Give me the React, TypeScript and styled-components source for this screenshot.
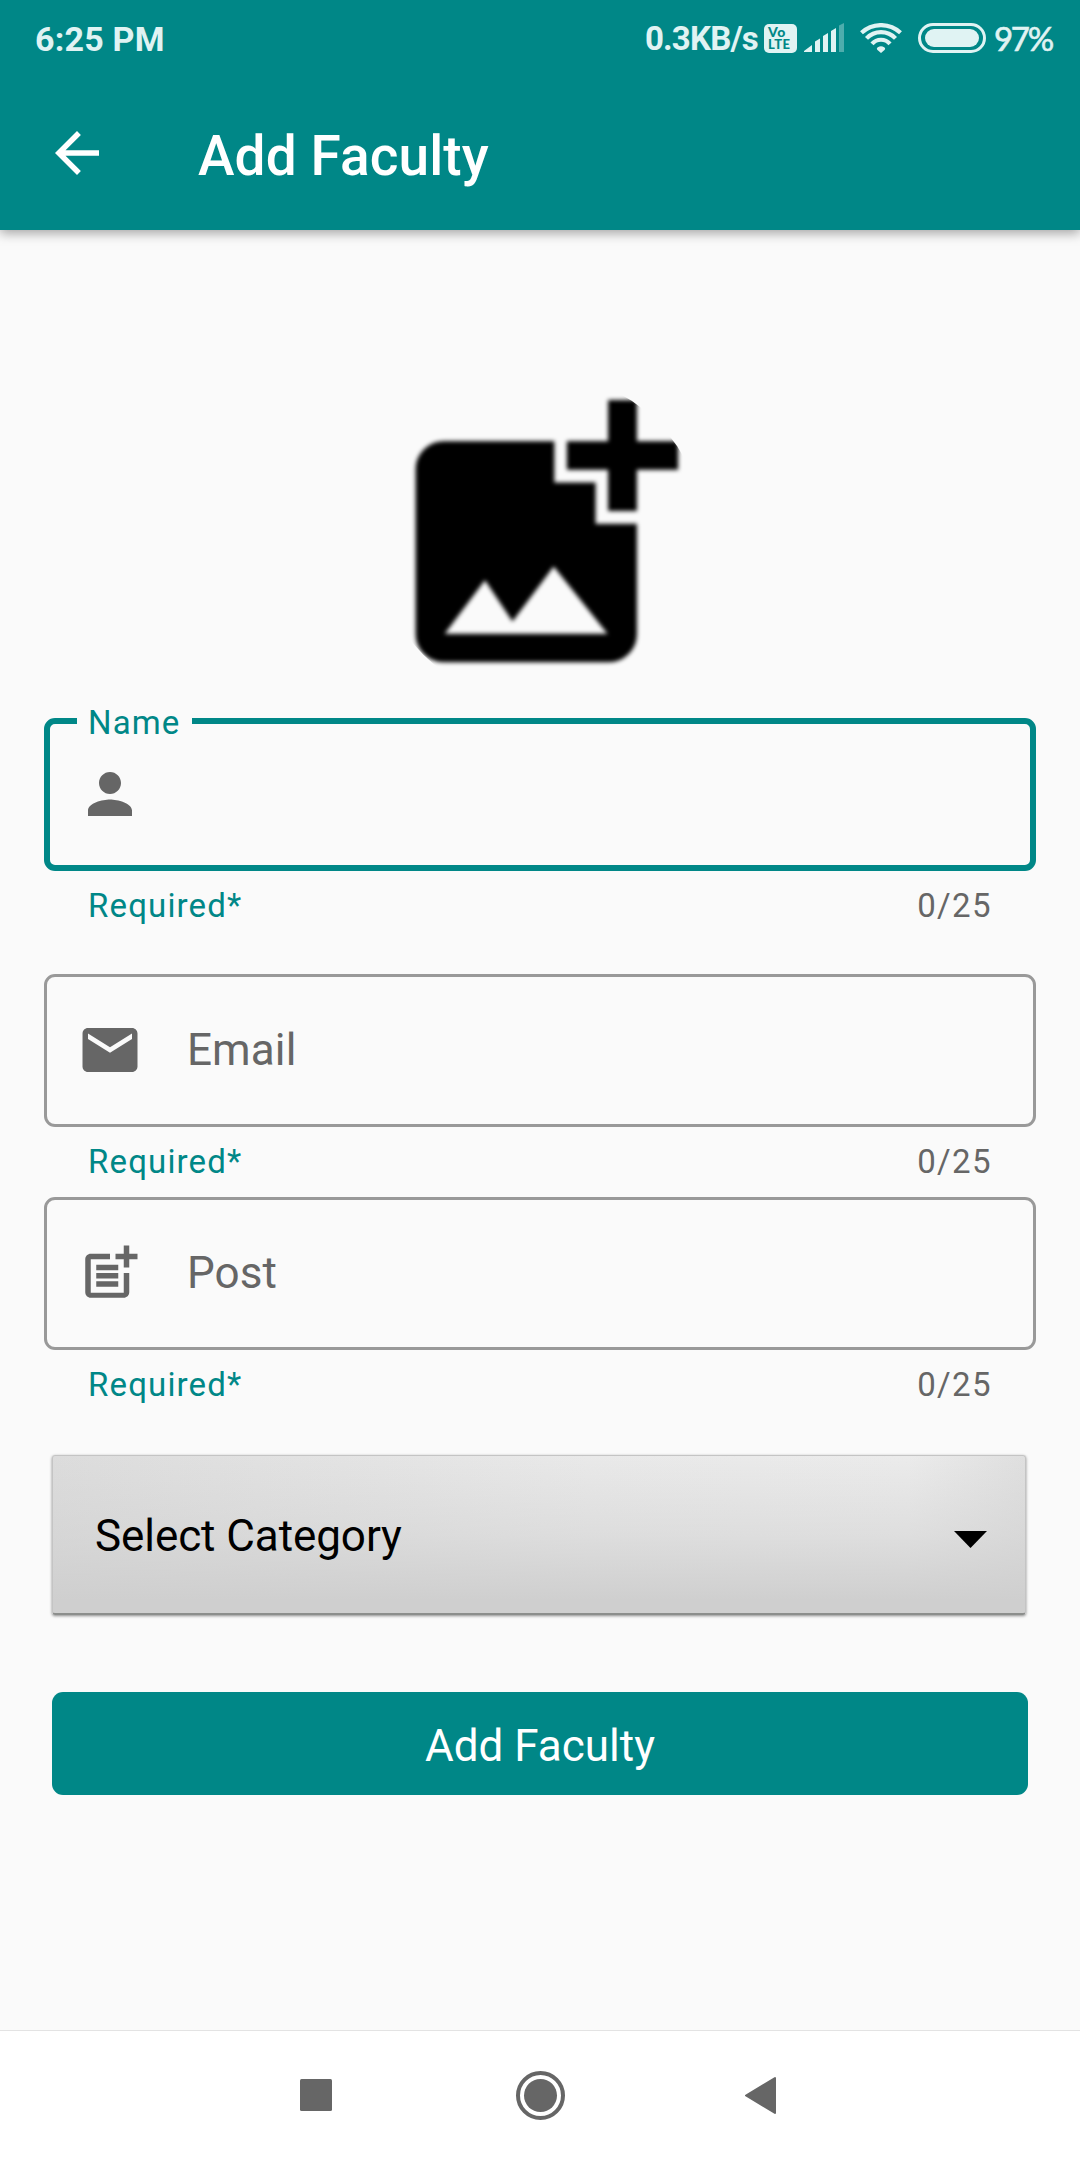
import React from 'react';
import styled, { createGlobalStyle } from 'styled-components';

const teal = '#008787';
const grey = '#666666';
const statusInk = '#e0f3f3';

const GlobalStyle = createGlobalStyle`
  html, body { margin: 0; padding: 0; background: #fafafa; }
  * { box-sizing: border-box; }
`;

const Screen = styled.div`
  width: 1080px;
  height: 2160px;
  display: flex;
  flex-direction: column;
  background: #fafafa;
  font-family: Roboto, 'Liberation Sans', sans-serif;
  overflow: hidden;
`;

const Header = styled.header`
  flex: none;
  height: 230px;
  background: ${teal};
  box-shadow: 0 3px 11px rgba(0, 0, 0, 0.36);
`;

const StatusBar = styled.div`
  height: 76px;
  display: flex;
  align-items: center;
  padding: 0 28px 0 35px;
  color: ${statusInk};
`;

const Clock = styled.span`
  font-size: 34px;
  font-weight: 700;
  line-height: 40px;
  padding-top: 1px;
  letter-spacing: 0.2px;
  margin-right: auto;
`;

const Speed = styled.span`
  font-size: 33px;
  font-weight: 700;
  line-height: 40px;
  padding-top: 1px;
  letter-spacing: -0.8px;
`;

const Volte = styled.div`
  display: flex;
  flex-direction: column;
  justify-content: center;
  width: 33px;
  height: 29px;
  margin: 1px 7px 0 6px;
  padding: 0 0 1px 4px;
  border-radius: 5px;
  background: ${statusInk};
  color: ${teal};
  font: 900 13px/13px Lato, sans-serif;
  letter-spacing: 0.5px;
`;

const VolteTop = styled.span`
  font-size: 14px;
`;

const StatusIcon = styled.svg<{ $gap: number }>`
  flex: none;
  display: block;
  margin-right: ${(p) => p.$gap}px;
`;

const Battery = styled.div`
  width: 68px;
  height: 30px;
  border: 3px solid ${statusInk};
  border-radius: 15px;
  padding: 3px 4px;
  margin-right: 8px;
`;

const Charge = styled.div`
  height: 100%;
  border-radius: 9px;
  background: ${statusInk};
`;

const Percent = styled.span`
  width: 58px;
  font: 400 33px/40px Lato, sans-serif;
  letter-spacing: -2.3px;
  -webkit-text-stroke: 0.6px ${statusInk};
  white-space: nowrap;
`;

const Toolbar = styled.div`
  height: 154px;
  display: flex;
  align-items: center;
  padding-left: 44px;
`;

const Title = styled.h1`
  margin: 0 0 0 88px;
  padding-top: 5px;
  font-size: 55px;
  line-height: 64px;
  font-weight: 500;
  letter-spacing: 0.1px;
  color: #fff;
`;

const Content = styled.main`
  flex: 1;
  display: flex;
  flex-direction: column;
  padding: 143px 44px 0;
`;

const Avatar = styled.div`
  width: 330px;
  height: 330px;
  margin: 0 auto 15px;
  border-radius: 50%;
  overflow: hidden;
`;

const AvatarIcon = styled.svg`
  display: block;
  width: 330px;
  height: 330px;
  stroke: #000;
  stroke-width: 0.09;
  filter: blur(2.2px);
`;

const Field = styled.div<{ $after: number }>`
  margin-bottom: ${(p) => p.$after}px;
`;

const Outline = styled.div<{ $active?: boolean }>`
  position: relative;
  height: 153px;
  display: flex;
  align-items: center;
  border: ${(p) => (p.$active ? `6px solid ${teal}` : '3px solid #999999')};
  border-radius: 11px;
  padding: 0 0 1px ${(p) => (p.$active ? 27 : 30)}px;
`;

const FloatingLabel = styled.label`
  position: absolute;
  left: 27px;
  top: -21px;
  width: 115px;
  padding-left: 11px;
  background: #fafafa;
  color: ${teal};
  font-size: 33px;
  line-height: 40px;
  letter-spacing: 1.1px;
`;

const FieldIcon = styled.svg`
  width: 66px;
  height: 66px;
  fill: ${grey};
`;

const Placeholder = styled.span`
  margin-left: 44px;
  font-size: 44px;
  line-height: 52px;
  letter-spacing: 0.1px;
  color: ${grey};
`;

const Helper = styled.div`
  display: flex;
  justify-content: space-between;
  margin-top: 15px;
  padding: 0 44px;
  font-size: 33px;
  line-height: 40px;
  letter-spacing: 1.15px;
`;

const Required = styled.span`
  color: ${teal};
`;

const Counter = styled.span`
  color: ${grey};
  letter-spacing: 1.4px;
`;

const Spinner = styled.div`
  flex: none;
  display: flex;
  align-items: center;
  justify-content: space-between;
  width: 974px;
  height: 160px;
  margin: 2px 0 77px 8px;
  padding: 2px 38px 0 42px;
  border: 1px solid #c4c4c4;
  border-bottom: 2px solid #8c8e8c;
  border-radius: 3px;
  background:
    linear-gradient(180deg, rgba(207, 207, 207, 0) 0%, rgba(207, 207, 207, 0.45) 50%, #cfcfcf 92%),
    linear-gradient(90deg, #dcdcdc 0%, #e9e9e9 55%, #ebebeb 88%, #dfdfdf 100%);
  box-shadow: 0 1px 3px rgba(0, 0, 0, 0.45);
  font-size: 44px;
  line-height: 52px;
  letter-spacing: -0.08px;
  color: #000;
`;

const Caret = styled.svg`
  margin-top: 7px;
`;

const SubmitButton = styled.button`
  flex: none;
  height: 103px;
  margin: 0 8px;
  padding: 4px 0 0;
  border: 0;
  border-radius: 11px;
  background: ${teal};
  color: #fff;
  font: 400 44px/52px Roboto, sans-serif;
`;

const NavBar = styled.nav`
  flex: none;
  height: 130px;
  display: flex;
  align-items: center;
  justify-content: center;
  gap: 179px;
  border-top: 1px solid #e3e3e3;
  background: #fff;
`;

const NavIcon = styled.svg`
  flex: none;
  width: 49px;
  height: 49px;
  overflow: visible;
  fill: ${grey};
`;

const icons = {
  person:
    'M12 12c2.21 0 4-1.79 4-4s-1.79-4-4-4-4 1.79-4 4 1.79 4 4 4zm0 2c-2.67 0-8 1.34-8 4v2h16v-2c0-2.66-5.33-4-8-4z',
  mail: 'M20 4H4c-1.1 0-1.99.9-1.99 2L2 18c0 1.1.9 2 2 2h16c1.1 0 2-.9 2-2V6c0-1.1-.9-2-2-2zm0 4l-8 5-8-5V6l8 5 8-5v2z',
  post: 'M17 19.22H5V7h7V5H5c-1.1 0-2 .9-2 2v12c0 1.1.9 2 2 2h12c1.1 0 2-.9 2-2v-7h-2v7.22zM19 2h-2v3h-3v2h3v2.99h2V7h3V5h-3V2zM7 9h8v2H7zM7 12v2h8v-2zM7 15h8v2H7z',
  photo:
    'M19 7v3h-2V7h-3V5h3V2h2v3h3v2h-3zm-3 4V8h-3V5H5c-1.1 0-2 .9-2 2v12c0 1.1.9 2 2 2h12c1.1 0 2-.9 2-2v-8h-3zM5 19l3-4 2 3 3-4 4 5H5z',
};

interface FieldProps {
  label: string;
  icon: string;
  after: number;
  active?: boolean;
}

function TextField({ label, icon, after, active }: FieldProps) {
  return (
    <Field $after={after}>
      <Outline $active={active}>
        {active && <FloatingLabel>{label}</FloatingLabel>}
        <FieldIcon viewBox="0 0 24 24">
          <path d={icon} />
        </FieldIcon>
        {!active && <Placeholder>{label}</Placeholder>}
      </Outline>
      <Helper>
        <Required>Required*</Required>
        <Counter>0/25</Counter>
      </Helper>
    </Field>
  );
}

export default function App() {
  return (
    <>
      <GlobalStyle />
      <Screen>
        <Header>
          <StatusBar>
            <Clock>6:25 PM</Clock>
            <Speed>0.3KB/s</Speed>
            <Volte>
              <VolteTop>Vo</VolteTop>
              <span>LTE</span>
            </Volte>
            <StatusIcon $gap={16} width="40" height="30" viewBox="0 0 40 30" fill={statusInk}>
              <path d="M0 29v-1l8-6v7zM11 29V18.500l5-3V29zM19 29V13l5-3V29zM27 29V8l5-3V29z" />
              <path d="M35 29V2.500L40 0V29z" opacity="0.35" />
            </StatusIcon>
            <StatusIcon $gap={16} width="42" height="30" viewBox="0 0 42 30" fill="none" stroke={statusInk} strokeWidth="4.200">
              <path d="M1.500 9.800a28.500 28.500 0 0 1 39 0M6.500 15.400a20 20 0 0 1 29 0M12 20.800a12 12 0 0 1 18 0" />
              <path d="M21 30l-3.800-3.300q-1-1.400 .6-2.400a6 6 0 0 1 6.400 0q1.600 1 .6 2.400z" fill={statusInk} stroke="none" />
            </StatusIcon>
            <Battery>
              <Charge />
            </Battery>
            <Percent>97%</Percent>
          </StatusBar>
          <Toolbar>
            <svg width="66" height="66" viewBox="0 0 24 24" fill="#fff">
              <path d="M20 11H7.830l5.590-5.590L12 4l-8 8 8 8 1.410-1.410L7.830 13H20v-2z" />
            </svg>
            <Title>Add Faculty</Title>
          </Toolbar>
        </Header>
        <Content>
          <Avatar>
            <AvatarIcon viewBox="0 0 24 24">
              <path d={icons.photo} />
            </AvatarIcon>
          </Avatar>
          <TextField label="Name" icon={icons.person} after={48} active />
          <TextField label="Email" icon={icons.mail} after={15} />
          <TextField label="Post" icon={icons.post} after={48} />
          <Spinner>
            <span>Select Category</span>
            <Caret width="33" height="17" viewBox="0 0 33 17">
              <path d="M0 0h33L16.500 17z" />
            </Caret>
          </Spinner>
          <SubmitButton>Add Faculty</SubmitButton>
        </Content>
        <NavBar>
          <NavIcon viewBox="0 0 49 49">
            <rect x="12" y="8" width="32" height="32" rx="1.500" />
          </NavIcon>
          <NavIcon viewBox="0 0 49 49">
            <circle cx="24.500" cy="24.500" r="22.500" fill="none" stroke={grey} strokeWidth="4" />
            <circle cx="24.500" cy="24.500" r="16.500" />
          </NavIcon>
          <NavIcon viewBox="0 0 49 49">
            <path d="M2 24.500L31 7v35z" stroke={grey} strokeWidth="2" strokeLinejoin="round" />
          </NavIcon>
        </NavBar>
      </Screen>
    </>
  );
}
